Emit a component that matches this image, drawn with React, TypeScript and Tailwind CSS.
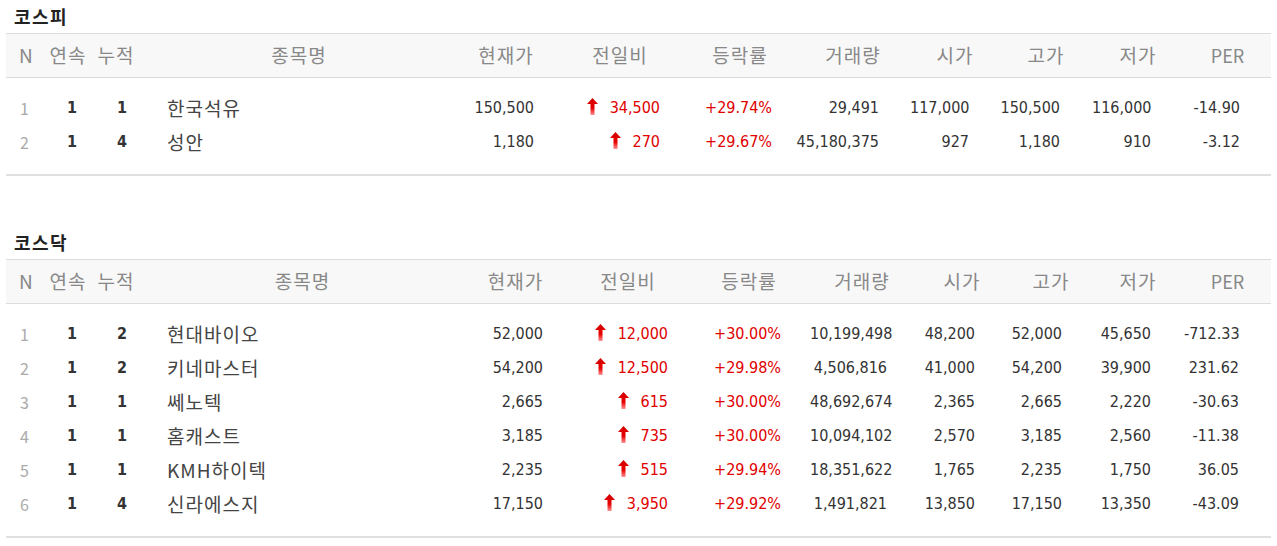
// @ts-nocheck
const KR = "font-['Noto_Sans_CJK_KR',sans-serif]";
const NUM = "font-['DejaVu_Sans_Condensed','DejaVu_Sans',sans-serif]";

const kospi = {
  title: "코스피",
  cols: "grid grid-cols-[40px_44px_52px_314px_100px_128px_112px_114px_90px_92px_92px_87px]",
  pads: ["pr-[22px]", "pr-[24px]", "pr-[24px]", "pr-[31px]", "pr-[31px]", "pr-[32px]", "pr-[33px]", "pr-[31px]"],
  rows: [
    ["1", "1", "1", "한국석유", "150,500", "34,500", "+29.74%", "29,491", "117,000", "150,500", "116,000", "-14.90"],
    ["2", "1", "4", "성안", "1,180", "270", "+29.67%", "45,180,375", "927", "1,180", "910", "-3.12"],
  ],
};

const kosdaq = {
  title: "코스닥",
  cols: "grid grid-cols-[40px_44px_52px_321px_105px_120px_122px_104px_96px_82px_92px_87px]",
  pads: ["pr-[25px]", "pr-[20px]", "pr-[29px]", "pr-[27px]", "pr-[35px]", "pr-[30px]", "pr-[33px]", "pr-[32px]"],
  rows: [
    ["1", "1", "2", "현대바이오", "52,000", "12,000", "+30.00%", "10,199,498", "48,200", "52,000", "45,650", "-712.33"],
    ["2", "1", "2", "키네마스터", "54,200", "12,500", "+29.98%", "4,506,816", "41,000", "54,200", "39,900", "231.62"],
    ["3", "1", "1", "쎄노텍", "2,665", "615", "+30.00%", "48,692,674", "2,365", "2,665", "2,220", "-30.63"],
    ["4", "1", "1", "홈캐스트", "3,185", "735", "+30.00%", "10,094,102", "2,570", "3,185", "2,560", "-11.38"],
    ["5", "1", "1", "KMH하이텍", "2,235", "515", "+29.94%", "18,351,622", "1,765", "2,235", "1,750", "36.05"],
    ["6", "1", "4", "신라에스지", "17,150", "3,950", "+29.92%", "1,491,821", "13,850", "17,150", "13,350", "-43.09"],
  ],
};

const heads = ["N", "연속", "누적", "종목명", "현재가", "전일비", "등락률", "거래량", "시가", "고가", "저가", "PER"];

function UpArrow() {
  return (
    <svg width="11" height="17" viewBox="0 0 11 17" className="mb-[4px] shrink-0">
      <defs>
        <linearGradient id="ua" x1="0" y1="0" x2="0" y2="1">
          <stop offset="0" stopColor="#d40000" />
          <stop offset="0.6" stopColor="#e80000" />
          <stop offset="1" stopColor="#ff9090" />
        </linearGradient>
      </defs>
      <polygon points="5.5,0 11,6 7.5,6 7.5,17 3.5,17 3.5,6 0,6" fill="url(#ua)" />
    </svg>
  );
}

function Table({ data }) {
  return (
    <div>
      <div className={`h-[33px] flex items-center pl-[8px] text-[18px] tracking-[1.5px] font-bold text-[#222] ${KR}`}>{data.title}</div>
      <div className={`${data.cols} h-[45px] items-center bg-[#f8f8f8] border-y border-[#dcdcdc] text-[19px] tracking-[1px] text-[#888] ${KR}`}>
        {heads.map((h, i) => (
          <div
            key={h}
            className={i === 0 ? "pl-[13px] tracking-normal" : i === 11 ? "text-center tracking-normal text-[18px]" : "text-center"}
          >
            {h}
          </div>
        ))}
      </div>
      <div className="pt-[13px] pb-[15px] border-b-2 border-[#e0e0e0]">
        {data.rows.map((r) => (
          <div key={r[0]} className={`${data.cols} h-[34px] items-center text-[16px] text-[#333]`}>
            <div className={`pl-[14px] text-[#aaa] ${KR}`}>{r[0]}</div>
            <div className={`text-center pl-[8px] font-bold text-[#333] ${NUM}`}>{r[1]}</div>
            <div className={`text-center pl-[12px] font-bold text-[#333] ${NUM}`}>{r[2]}</div>
            <div className={`pl-[25px] text-[19px] tracking-[1px] text-[#444] ${KR}`}>{r[3]}</div>
            <div className={`text-right ${data.pads[0]} ${NUM}`}>{r[4]}</div>
            <div className={`flex justify-end items-center gap-[12px] text-[#e00000] ${data.pads[1]} ${NUM}`}>
              <UpArrow />
              <span>{r[5]}</span>
            </div>
            <div className={`text-right text-[#e00000] ${data.pads[2]} ${NUM}`}>{r[6]}</div>
            <div className={`text-right ${data.pads[3]} ${NUM}`}>{r[7]}</div>
            <div className={`text-right ${data.pads[4]} ${NUM}`}>{r[8]}</div>
            <div className={`text-right ${data.pads[5]} ${NUM}`}>{r[9]}</div>
            <div className={`text-right ${data.pads[6]} ${NUM}`}>{r[10]}</div>
            <div className={`text-right ${data.pads[7]} ${NUM}`}>{r[11]}</div>
          </div>
        ))}
      </div>
    </div>
  );
}

export default function App() {
  return (
    <div className="w-[1277px] h-[546px] bg-white px-[6px] overflow-hidden">
      <Table data={kospi} />
      <div className="mt-[50px]">
        <Table data={kosdaq} />
      </div>
    </div>
  );
}
